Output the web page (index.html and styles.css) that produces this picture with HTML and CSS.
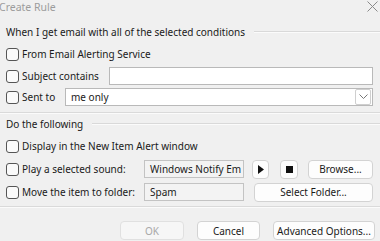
FILE: index.html
```html
<!DOCTYPE html>
<html lang="en">
<head>
  <meta charset="UTF-8" />
  <title>Create Rule</title>
  <link rel="stylesheet" href="styles.css">
</head>
<body>
  <div class="dialog">
    <div class="titlebar">
      <span class="title">Create Rule</span>
      <svg class="close" width="11" height="11" viewBox="0 0 11 11"><path d="M0.5 0.5 L10.5 10.5 M10.5 0.5 L0.5 10.5" stroke="#8a8a8a" stroke-width="1" fill="none"/></svg>
    </div>

    <div class="group-head"><span>When I get email with all of the selected conditions</span><i class="rule"></i></div>

    <div class="row r-from">
      <label class="check"><span class="box"></span>From Email Alerting Service</label>
    </div>
    <div class="row r-subject">
      <label class="check lbl-subject"><span class="box"></span>Subject contains</label>
      <div class="field subject"></div>
    </div>
    <div class="row r-sent">
      <label class="check lbl-sent"><span class="box"></span>Sent to</label>
      <div class="field select">
        <span>me only</span>
        <span class="drop"><svg width="9" height="6" viewBox="0 0 9 6"><path d="M0.5 0.5 L4.5 4.5 L8.5 0.5" stroke="#777" fill="none"/></svg></span>
      </div>
    </div>

    <div class="divider d-group"></div>

    <div class="group-head g2"><span>Do the following</span><i class="rule"></i></div>

    <div class="row r-display">
      <label class="check"><span class="box"></span>Display in the New Item Alert window</label>
    </div>
    <div class="row r-sound">
      <label class="check lbl-wide"><span class="box"></span>Play a selected sound:</label>
      <div class="field readonly sound">Windows Notify Em</div>
      <button class="btn icon play"><svg width="6" height="9" viewBox="0 0 6 9"><path d="M0 0 L6 4.5 L0 9 Z" fill="#111"/></svg></button>
      <button class="btn icon stop"><svg width="7" height="7" viewBox="0 0 7 7"><rect width="7" height="7" fill="#111"/></svg></button>
      <button class="btn browse">Browse...</button>
    </div>
    <div class="row r-move">
      <label class="check lbl-wide"><span class="box"></span>Move the item to folder:</label>
      <div class="field readonly folder">Spam</div>
      <button class="btn select-folder">Select Folder...</button>
    </div>

    <div class="divider d-bottom"></div>

    <div class="actions">
      <button class="btn ok" disabled>OK</button>
      <button class="btn cancel">Cancel</button>
      <button class="btn advanced">Advanced Options...</button>
    </div>
  </div>
</body>
</html>
```

FILE: styles.css
```css
body { margin: 0; background: #f0f0f0; font-family: "Noto Sans", "Open Sans", sans-serif; font-size: 10px; color: #1a1a1a; }
.dialog { width: 380px; height: 241px; overflow: hidden; }

.titlebar { height: 22px; display: flex; align-items: flex-start; justify-content: space-between; }
.title { color: #9c9c9c; font-size: 10.5px; line-height: 15px; margin-left: -1px; }
.close { margin: 1px 2px 0 0; }

.group-head { height: 20px; display: flex; align-items: center; padding-left: 6px; white-space: nowrap; }
.group-head .rule { flex: 1; height: 1px; background: #d9d9d9; border-bottom: 1px solid #fbfbfb; margin-left: 9px; }
.g2 { height: 18px; margin-top: 1px; }

.row { height: 20px; display: flex; align-items: center; padding-left: 6px; padding-right: 7px; margin-top: 2px; white-space: nowrap; }
.r-sent { margin-top: 1px; }
.r-display { margin-top: 3px; }
.r-sound, .r-move { margin-top: 3px; }

.check { display: flex; align-items: center; }
.box {
  width: 11px; height: 11px; border: 1px solid #555; border-radius: 3px;
  background: #fafafa; margin-right: 3px; flex: none;
}
.lbl-subject { width: 103px; }
.lbl-sent { width: 59px; }
.lbl-wide { width: 138px; }

.field {
  height: 16px; border: 1px solid #b9b9b9; background: #fff;
  display: flex; align-items: center; padding: 0 5px; box-sizing: content-box;
}
.subject { flex: 1; }
.select { flex: 1; justify-content: space-between; padding-right: 1px; }
.drop {
  width: 14px; height: 14px; border: 1px solid #cfcfcf; border-radius: 2px;
  display: flex; align-items: center; justify-content: center;
}
.readonly { background: #f3f3f3; border-color: #c3c3c3; width: 88px; overflow: hidden; }

.btn {
  font: inherit; color: #1a1a1a; height: 19px; padding: 0; white-space: nowrap;
  background: #fdfdfd; border: 1px solid #d3d3d3; border-radius: 4px;
  display: flex; align-items: center; justify-content: center;
}
.icon { width: 17px; }
.play { margin-left: 8px; }
.stop { margin-left: 11px; width: 18px; }
.browse { margin-left: 10px; flex: 1; }
.select-folder { margin-left: 10px; flex: 1; }

.divider { height: 1px; background: #dadada; border-bottom: 1px solid #fbfbfb; }
.d-group { margin-top: 5px; }
.d-bottom { margin-top: 4px; }

.actions { display: flex; justify-content: flex-end; gap: 13px; padding-right: 5px; margin-top: 13px; }
.actions .btn { height: 19px; }
.ok { width: 64px; color: #a8a8a8; background: #f6f6f6; border-color: #e0e0e0; }
.cancel { width: 63px; }
.advanced { width: 102px; }
```
